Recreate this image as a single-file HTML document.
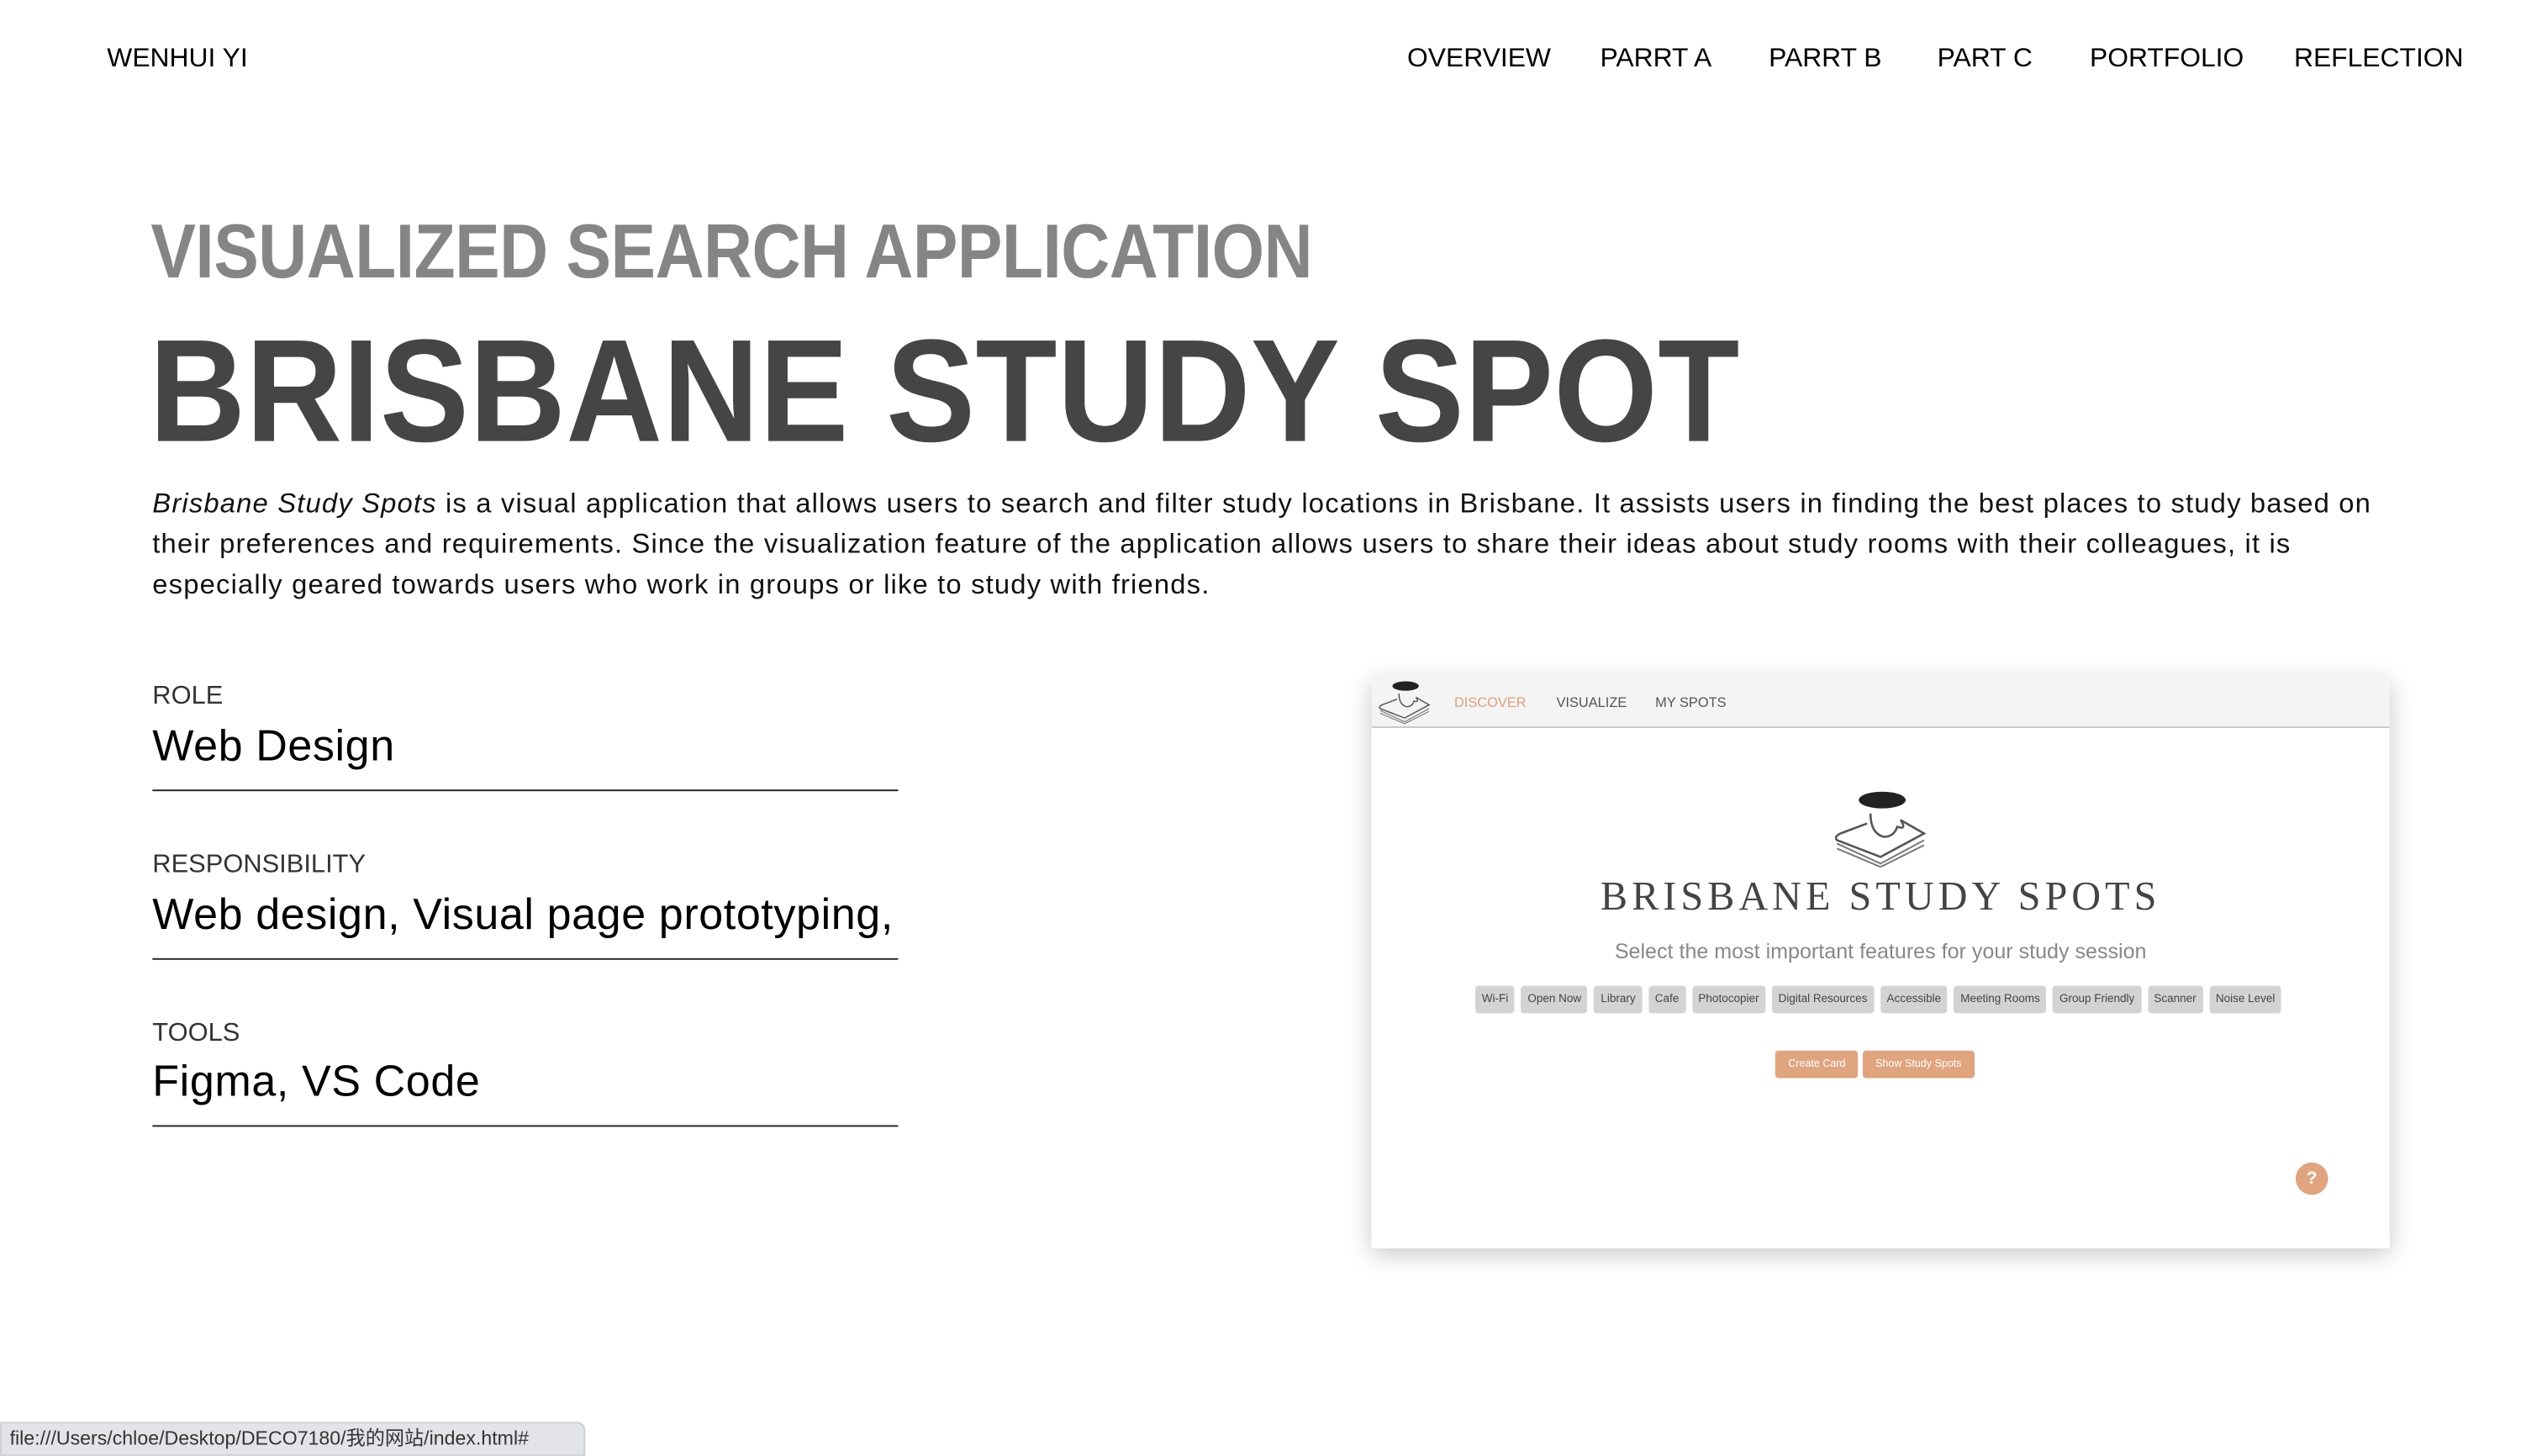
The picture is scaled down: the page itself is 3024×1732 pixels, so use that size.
<!DOCTYPE html>
<html><head><meta charset="utf-8"><style>
html,body{margin:0;padding:0;background:#fff;overflow:hidden;width:3024px;height:1732px}
#w{position:absolute;left:0;top:0;width:1568px;height:898px;transform:scale(1.9286);transform-origin:0 0;font-family:"Liberation Sans","Noto Sans CJK SC",sans-serif;color:#000}
.a{position:absolute;white-space:nowrap}
.nav{font-size:16.5px;top:27px}
.lab{font-size:16px;color:#333;font-weight:300}
.val{font-size:27px;color:#000;letter-spacing:0.3px}
.ln{position:absolute;left:94px;width:460px;height:1px;background:#222}
.chip{display:inline-block;background:#d3d3d3;border-radius:2px;font-size:7px;color:#444;padding:0 4px;height:17px;line-height:17px;margin-right:4px}
.ob{display:inline-block;background:#e0a47f;border-radius:2px;font-size:6.5px;color:#fff;height:17px;line-height:17px;padding:0 8px}
</style></head><body><div id="w">
<div class="a" style="left:66px;top:27px;font-size:16.5px">WENHUI YI</div>
<div class="a nav" style="left:868px">OVERVIEW</div>
<div class="a nav" style="left:987px">PARRT A</div>
<div class="a nav" style="left:1091px">PARRT B</div>
<div class="a nav" style="left:1195px">PART C</div>
<div class="a nav" style="left:1289px">PORTFOLIO</div>
<div class="a nav" style="left:1415px">REFLECTION</div>

<div class="a" style="left:93px;top:127px;font-size:47px;font-weight:bold;color:#858585;letter-spacing:-0.3px;transform:scaleX(0.886);transform-origin:0 0">VISUALIZED SEARCH APPLICATION</div>
<div class="a" style="left:92px;top:191px;font-size:90px;font-weight:bold;color:#454545;letter-spacing:0.2px;transform:scaleX(0.915);transform-origin:0 0">BRISBANE STUDY SPOT</div>

<div class="a" style="left:94px;top:298px;font-size:17px;line-height:25px;letter-spacing:0.6px;color:#111">
<i>Brisbane Study Spots</i> is a visual application that allows users to search and filter study locations in Brisbane. It assists users in finding the best places to study based on<br>
their preferences and requirements. Since the visualization feature of the application allows users to share their ideas about study rooms with their colleagues, it is<br>
especially geared towards users who work in groups or like to study with friends.</div>

<div class="a lab" style="left:94px;top:421px">ROLE</div>
<div class="a val" style="left:94px;top:445px">Web Design</div>
<div class="ln" style="top:487px"></div>
<div class="a lab" style="left:94px;top:525px">RESPONSIBILITY</div>
<div class="a val" style="left:94px;top:549px">Web design, Visual page prototyping,</div>
<div class="ln" style="top:591px"></div>
<div class="a lab" style="left:94px;top:629px">TOOLS</div>
<div class="a val" style="left:94px;top:652px">Figma, VS Code</div>
<div class="ln" style="top:694px"></div>

<div class="a" style="left:846px;top:417px;width:628px;height:353px;background:#fff;box-shadow:0 4px 14px rgba(0,0,0,0.22)">
 <div style="position:absolute;left:0;top:0;width:628px;height:31px;background:#f4f4f4;border-bottom:1.5px solid #c8c8c8"></div>
 <svg style="position:absolute;left:3px;top:2px" width="36" height="28" viewBox="0 0 62 46"><ellipse cx="31" cy="6" rx="14" ry="5" fill="#222"/><path d="M24 14 Q24 26 32 28 Q38 28 40 22 Q46 24 42 18 L56 26 L30 40 L4 30 Q2 28 6 26 L22 20" fill="none" stroke="#555" stroke-width="1.3"/><path d="M4 32 L30 44 L56 30 M4 35 L30 46 L56 33" fill="none" stroke="#777" stroke-width="1"/></svg>
 <div class="a" style="left:51px;top:11px;font-size:8.5px;color:#e0a07c">DISCOVER</div>
 <div class="a" style="left:114px;top:11px;font-size:8.5px;color:#555">VISUALIZE</div>
 <div class="a" style="left:175px;top:11px;font-size:8.5px;color:#555">MY SPOTS</div>
 <svg style="position:absolute;left:283px;top:70px" width="64" height="48" viewBox="0 0 62 46"><ellipse cx="31" cy="6" rx="14" ry="5" fill="#222"/><path d="M24 14 Q24 26 32 28 Q38 28 40 22 Q46 24 42 18 L56 26 L30 40 L4 30 Q2 28 6 26 L22 20" fill="none" stroke="#555" stroke-width="1.3"/><path d="M4 32 L30 44 L56 30 M4 35 L30 46 L56 33" fill="none" stroke="#777" stroke-width="1"/></svg>
 <div class="a" style="left:0;width:628px;text-align:center;top:123px;font-family:'Liberation Serif',serif;font-size:25px;letter-spacing:2.6px;color:#444">BRISBANE STUDY SPOTS</div>
 <div class="a" style="left:0;width:628px;text-align:center;top:162px;font-size:13px;color:#888;font-weight:300">Select the most important features for your study session</div>
 <div class="a" style="left:64px;top:188px"><span class="chip">Wi-Fi</span><span class="chip">Open Now</span><span class="chip">Library</span><span class="chip">Cafe</span><span class="chip">Photocopier</span><span class="chip">Digital Resources</span><span class="chip">Accessible</span><span class="chip">Meeting Rooms</span><span class="chip">Group Friendly</span><span class="chip">Scanner</span><span class="chip">Noise Level</span></div>
 <div class="a" style="left:249px;top:228px"><span class="ob">Create Card</span> <span class="ob" style="margin-left:-2px">Show Study Spots</span></div>
 <div class="a" style="left:570px;top:300px;width:20px;height:20px;border-radius:50%;background:#e0a47f;color:#fff;font-size:11px;font-weight:bold;text-align:center;line-height:20px">?</div>
</div>

<div class="a" style="left:0;top:877px;width:361px;height:21px;background:#e3e4e7;border:1px solid #d0d0d3;border-radius:0 5px 0 0;box-sizing:border-box;font-size:12px;line-height:19px;padding-left:5px;color:#333">file:///Users/chloe/Desktop/DECO7180/我的网站/index.html#</div>
</div></body></html>
